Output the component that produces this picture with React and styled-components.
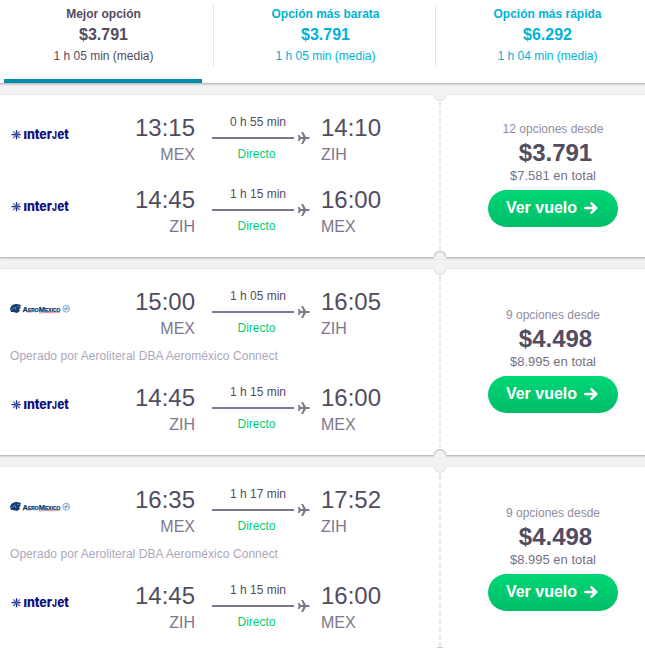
import React from 'react';
import styled, { createGlobalStyle } from 'styled-components';

const GlobalStyle = createGlobalStyle`
  * { box-sizing: border-box; }
  body {
    margin: 0;
    overflow: hidden;
    background: #f2f2f5;
    color: #524c61;
    font-family: "Liberation Sans", Arial, sans-serif;
  }
`;

const Page = styled.main`
  width: 645px;
  height: 648px;
  overflow: hidden;
`;

const Tabs = styled.nav`
  display: flex;
  width: 666px;
  height: 83px;
  margin: 0 0 12px -8px;
  background: #fff;
  box-shadow: 0 1px 2px rgba(0, 0, 0, 0.32);
`;

const Tab = styled.div`
  flex: 0 0 222px;
  display: flex;
  flex-direction: column;
  align-items: center;
  padding: 5px 0 0;
  color: ${(p) => (p.$active ? '#524c61' : '#00b2d6')};
`;

const TabBody = styled.div`
  display: flex;
  flex-direction: column;
  align-items: center;
  width: 100%;
  height: 61px;
  padding-left: 2px;
  border-right: 1px solid #e4e4e7;
`;

const TabTitle = styled.strong`
  font-size: 12px;
  line-height: 18px;
`;

const TabPrice = styled.strong`
  font-size: 16px;
  line-height: 24px;
`;

const TabTime = styled.span`
  font-size: 12px;
  line-height: 18px;
`;

const Underline = styled.div`
  width: 198px;
  height: 4px;
  margin-top: 13px;
  background: #008eaa;
`;

const Card = styled.article`
  display: flex;
  width: 665px;
  height: ${(p) => p.$height}px;
  margin-bottom: 12px;
  background: #fff;
  box-shadow: 0 1px 2px rgba(0, 0, 0, 0.32), 0 -1px 1px rgba(0, 0, 0, 0.02);
`;

const Legs = styled.section`
  flex: 0 0 433px;
  padding: 9px 0 9px 10px;
`;

const Leg = styled.div`
  display: grid;
  grid-template-columns: 60px 125px 17px 98px 11px 100px;
  height: 72px;
`;

const LogoCell = styled.div`
  padding-top: 20px;
  height: 42px;
`;

const Logo = styled.svg`
  display: block;
  width: 61px;
  height: 20px;
  overflow: visible;
`;

const InterjetText = styled.text`
  fill: #0c0c80;
  font-family: Inter, sans-serif;
  font-size: ${(p) => p.$size}px;
  font-weight: 800;
`;

const AeromexicoText = styled.text`
  fill: #163661;
  stroke: #163661;
  stroke-width: 0.25px;
  font-family: "Liberation Sans", Arial, sans-serif;
  font-size: 7.6px;
  font-variant: small-caps;
  font-weight: 700;
`;

const Stop = styled.div`
  grid-column: ${(p) => p.$column};
  display: flex;
  flex-direction: column;
  padding-top: 10px;
  text-align: ${(p) => p.$align};
`;

const Hour = styled.span`
  font-size: 24px;
  line-height: 28px;
`;

const Airport = styled.span`
  color: #7c778c;
  font-size: 16px;
  line-height: 25px;
`;

const Route = styled.div`
  grid-column: 4;
  padding-top: 9px;
`;

const Duration = styled.div`
  padding-right: 6px;
  font-size: 12px;
  line-height: 18px;
  text-align: center;
`;

const Track = styled.div`
  display: flex;
  align-items: center;
  gap: 3px;
  height: 14px;
`;

const Line = styled.div`
  width: 82px;
  height: 2px;
  background: #7d788f;
`;

const Plane = styled.svg`
  width: 13px;
  height: 12px;
`;

const Direct = styled.div`
  padding-right: 9px;
  color: #00d070;
  font-size: 12px;
  line-height: 18px;
  text-align: center;
`;

const Operator = styled.div`
  height: 24px;
  color: #aba7ba;
  font-size: 12px;
  letter-spacing: 0.055px;
  line-height: 12px;
`;

const Perforation = styled.div`
  flex: 0 0 14px;
  display: flex;
  flex-direction: column;
  align-items: center;
`;

const Notch = styled.svg`
  flex: none;
  display: block;
  width: 14px;
  height: 7px;
  overflow: visible;
`;

const Dashes = styled.div`
  flex: 1;
  width: 2px;
  background: repeating-linear-gradient(#e4e3ea 0 6px, #fff 6px 8px);
`;

const Offer = styled.aside`
  flex: 0 0 212px;
  display: flex;
  flex-direction: column;
  align-items: center;
  justify-content: center;
  padding: 0 0 7px;
`;

const Options = styled.span`
  color: #918c9e;
  font-size: 12px;
  line-height: 20px;
`;

const Price = styled.strong`
  padding-left: 5px;
  font-size: 24px;
  line-height: 28px;
`;

const Total = styled.span`
  color: #777285;
  font-size: 13px;
  line-height: 18px;
`;

const Button = styled.button`
  display: flex;
  align-items: center;
  justify-content: center;
  gap: 7px;
  width: 130px;
  height: 37px;
  margin-top: 5px;
  padding: 0 2px 0 0;
  border: 0;
  border-radius: 19px;
  background: linear-gradient(#00d775, #00bd68);
  color: #fff;
  font: bold 16px "Liberation Sans", Arial, sans-serif;
`;

const Arrow = styled.svg`
  width: 14px;
  height: 12px;
`;

function InterjetLogo() {
  return (
    <Logo viewBox="0 0 61 20" aria-label="interjet">
      <g stroke="#17208a" strokeWidth="1.3">
        <path d="M1.5 10.7h9.2M6.5 6.2v9" />
        <path d="M3.2 7.4l6.6 6.6M9.8 7.4l-6.6 6.6" stroke="#496bac" />
      </g>
      <InterjetText x="13.4" y="15" $size={13} textLength="28.6" lengthAdjust="spacingAndGlyphs">ınter</InterjetText>
      <InterjetText x="42.1" y="15" $size={10} textLength="4.9" lengthAdjust="spacingAndGlyphs">J</InterjetText>
      <InterjetText x="47.2" y="15" $size={13} textLength="11.7" lengthAdjust="spacingAndGlyphs">et</InterjetText>
    </Logo>
  );
}

function AeromexicoLogo() {
  return (
    <Logo viewBox="0 0 61 20" aria-label="AeroMexico">
      <path d="M0 11C1 7 4 6 7 6l4 1-1 2 1 1-2 1 1 2-3 2-4-1-2 0z" fill="#153c70" />
      <path d="M1 12l4-3 1 3M7 8l2 1" fill="none" stroke="#8eaac8" strokeWidth=".7" />
      <AeromexicoText x="12.5" y="13.5" textLength="38" lengthAdjust="spacingAndGlyphs">AeroMexico</AeromexicoText>
      <path d="M29 15.2q5-1.1 10-.5t11-.5" fill="none" stroke="#df6870" strokeWidth=".7" />
      <circle cx="56.2" cy="10.7" r="3.5" fill="#edf5fa" stroke="#80a9c7" strokeWidth=".9" />
      <path d="M53.8 10.8h5M55 12.8l2.4-4.4" stroke="#5d8eb7" strokeWidth=".8" />
    </Logo>
  );
}

function FlightLeg({ airline, from, to, depart, arrive, duration }) {
  return (
    <Leg>
      <LogoCell>{airline === 'interjet' ? <InterjetLogo /> : <AeromexicoLogo />}</LogoCell>
      <Stop $column={2} $align="right">
        <Hour>{depart}</Hour>
        <Airport>{from}</Airport>
      </Stop>
      <Route>
        <Duration>{duration}</Duration>
        <Track>
          <Line />
          <Plane viewBox="0 0 13 12">
            <path d="M.8 3h1.3L4 5.1h2.3L4.2 0h1.9L9 5.1h2.3q1.2 0 1.7.9-.5.9-1.7.9H9L6.1 12H4.2l2.1-5.1H4L2.1 9H.8l.8-3z" fill="#7d788f" />
          </Plane>
        </Track>
        <Direct>Directo</Direct>
      </Route>
      <Stop $column={6} $align="left">
        <Hour>{arrive}</Hour>
        <Airport>{to}</Airport>
      </Stop>
    </Leg>
  );
}

function FlightCard({ height, outbound, operator, options, price, total }) {
  return (
    <Card $height={height}>
      <Legs>
        <FlightLeg from="MEX" to="ZIH" {...outbound} />
        {operator && <Operator>{operator}</Operator>}
        <FlightLeg airline="interjet" from="ZIH" to="MEX" depart="14:45" arrive="16:00" duration="1 h 15 min" />
      </Legs>
      <Perforation>
        <Notch viewBox="0 0 14 7">
          <path d="M1-1V0a6 6 0 0 0 12 0V-1z" fill="#f2f2f5" />
          <path d="M1.5 0a5.5 5.5 0 0 0 11 0" fill="none" stroke="#dedee2" />
        </Notch>
        <Dashes />
        <Notch viewBox="0 0 14 7">
          <path d="M1 9V7a6 6 0 0 1 12 0v2z" fill="#f2f2f5" />
          <path d="M1.5 7a5.5 5.5 0 0 1 11 0" fill="none" stroke="#c6c6ca" strokeWidth="1.3" />
        </Notch>
      </Perforation>
      <Offer>
        <Options>{options} opciones desde</Options>
        <Price>{price}</Price>
        <Total>{total} en total</Total>
        <Button>
          Ver vuelo
          <Arrow viewBox="0 0 14 12">
            <path d="M1.2 6h11M7.5 1.3L12.2 6l-4.7 4.7" fill="none" stroke="#fff" strokeWidth="2.6" strokeLinecap="round" strokeLinejoin="round" />
          </Arrow>
        </Button>
      </Offer>
    </Card>
  );
}

const tabs = [
  { title: 'Mejor opción', price: '$3.791', time: '1 h 05 min (media)', active: true },
  { title: 'Opción más barata', price: '$3.791', time: '1 h 05 min (media)' },
  { title: 'Opción más rápida', price: '$6.292', time: '1 h 04 min (media)' },
];

const operator = 'Operado por Aeroliteral DBA Aeroméxico Connect';

const flights = [
  {
    height: 162, options: 12, price: '$3.791', total: '$7.581',
    outbound: { airline: 'interjet', depart: '13:15', arrive: '14:10', duration: '0 h 55 min' },
  },
  {
    height: 186, options: 9, price: '$4.498', total: '$8.995', operator,
    outbound: { airline: 'aeromexico', depart: '15:00', arrive: '16:05', duration: '1 h 05 min' },
  },
  {
    height: 186, options: 9, price: '$4.498', total: '$8.995', operator,
    outbound: { airline: 'aeromexico', depart: '16:35', arrive: '17:52', duration: '1 h 17 min' },
  },
];

export default function App() {
  return (
    <Page>
      <GlobalStyle />
      <Tabs>
        {tabs.map((tab) => (
          <Tab key={tab.title} $active={tab.active}>
            <TabBody>
              <TabTitle>{tab.title}</TabTitle>
              <TabPrice>{tab.price}</TabPrice>
              <TabTime>{tab.time}</TabTime>
            </TabBody>
            {tab.active && <Underline />}
          </Tab>
        ))}
      </Tabs>
      {flights.map((flight) => (
        <FlightCard key={flight.outbound.depart} {...flight} />
      ))}
    </Page>
  );
}
